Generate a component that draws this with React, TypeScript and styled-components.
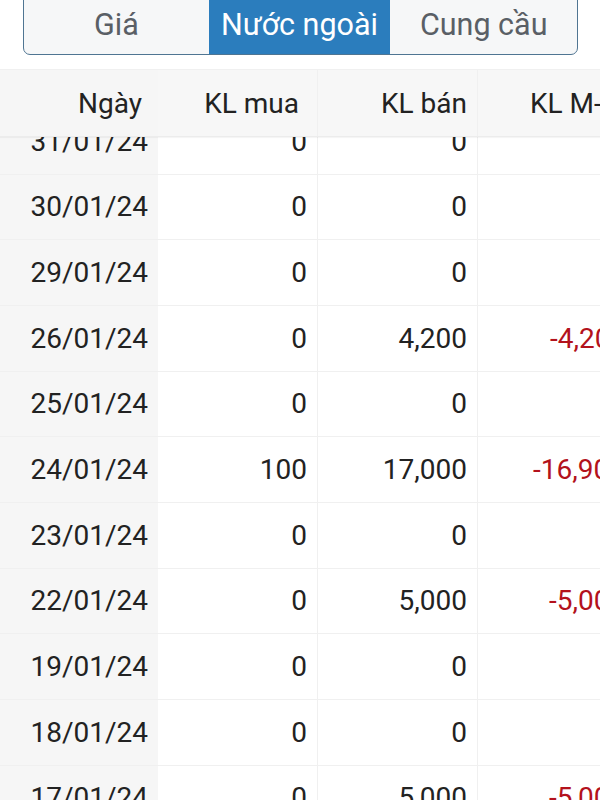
import { createGlobalStyle, styled } from "styled-components";

const GlobalStyle = createGlobalStyle`
  html, body {
    margin: 0;
    padding: 0;
    background: #ffffff;
  }
  body {
    font-family: Roboto, "Liberation Sans", Arial, sans-serif;
    color: #222;
  }
`;

const Screen = styled.div`
  width: 600px;
  height: 800px;
  overflow: hidden;
  background: #fff;
  display: flex;
  flex-direction: column;
`;

const TabBar = styled.div`
  display: flex;
  margin: -8px 22px 0 23px;
  height: 61px;
  border: 1.5px solid #4f7592;
  border-radius: 0 0 7px 7px;
  overflow: hidden;
  background: #f6f7f8;
  flex-shrink: 0;
`;

const Tab = styled.div<{ $active?: boolean; $w: number }>`
  width: ${(p) => p.$w}px;
  display: flex;
  align-items: center;
  justify-content: center;
  padding-top: 2px;
  font-size: 30.5px;
  color: ${(p) => (p.$active ? "#ffffff" : "#5a5f66")};
  background: ${(p) => (p.$active ? "#2b7dbd" : "transparent")};
`;

const Spacer = styled.div`
  height: 14px;
  flex-shrink: 0;
`;

const Table = styled.div`
  position: relative;
  flex: 1;
  overflow: hidden;
`;

const Row = styled.div<{ $head?: boolean }>`
  display: grid;
  grid-template-columns: 158px 160px 160px 160px;
  height: ${(p) => (p.$head ? "67px" : "65.67px")};
  box-sizing: border-box;
  border-bottom: 1px solid ${(p) => (p.$head ? "#ececec" : "#f0f0f0")};
  background: ${(p) => (p.$head ? "#f7f7f7" : "#fff")};
`;

const Header = styled.div`
  position: relative;
  z-index: 2;
  border-top: 1px solid #f0f0f0;
  box-shadow: 0 1px 1px rgba(0, 0, 0, 0.04);
`;

const Body = styled.div`
  margin-top: -28px;
`;

const Cell = styled.div<{ $first?: boolean; $neg?: boolean; $pad?: number }>`
  display: flex;
  align-items: center;
  justify-content: flex-end;
  padding-right: ${(p) => p.$pad ?? 10}px;
  font-size: 28px;
  white-space: nowrap;
  color: ${(p) => (p.$neg ? "#b3121c" : "#222")};
  background: ${(p) => (p.$first ? "#f6f6f6" : "transparent")};
  border-right: ${(p) => (p.$first ? "none" : "1px solid #f0f0f0")};
  box-sizing: border-box;
`;

const LastCell = styled(Cell)<{ $indent: number }>`
  justify-content: flex-start;
  padding-left: ${(p) => p.$indent}px;
  padding-right: 0;
`;

type Item = { date: string; buy: string; sell: string; net?: string; netIndent?: number };

const rows: Item[] = [
  { date: "31/01/24", buy: "0", sell: "0" },
  { date: "30/01/24", buy: "0", sell: "0" },
  { date: "29/01/24", buy: "0", sell: "0" },
  { date: "26/01/24", buy: "0", sell: "4,200", net: "-4,200", netIndent: 72 },
  { date: "25/01/24", buy: "0", sell: "0" },
  { date: "24/01/24", buy: "100", sell: "17,000", net: "-16,900", netIndent: 55 },
  { date: "23/01/24", buy: "0", sell: "0" },
  { date: "22/01/24", buy: "0", sell: "5,000", net: "-5,000", netIndent: 71 },
  { date: "19/01/24", buy: "0", sell: "0" },
  { date: "18/01/24", buy: "0", sell: "0" },
  { date: "17/01/24", buy: "0", sell: "5,000", net: "-5,000", netIndent: 71 },
];

const App = () => {
  return (
    <Screen>
      <GlobalStyle />
      <TabBar>
        <Tab $w={185}>Giá</Tab>
        <Tab $w={182} $active>
          Nước ngoài
        </Tab>
        <Tab $w={187}>Cung cầu</Tab>
      </TabBar>
      <Spacer />
      <Table>
        <Header>
          <Row $head>
            <Cell $first $pad={16}>
              Ngày
            </Cell>
            <Cell $pad={18}>KL mua</Cell>
            <Cell $pad={10}>KL bán</Cell>
            <LastCell $indent={52}>KL M-B</LastCell>
          </Row>
        </Header>
        <Body>
          {rows.map((r) => (
            <Row key={r.date}>
              <Cell $first>{r.date}</Cell>
              <Cell>{r.buy}</Cell>
              <Cell>{r.sell}</Cell>
              <LastCell $neg $indent={r.netIndent ?? 0}>
                {r.net ?? ""}
              </LastCell>
            </Row>
          ))}
        </Body>
      </Table>
    </Screen>
  );
};

export default App;
